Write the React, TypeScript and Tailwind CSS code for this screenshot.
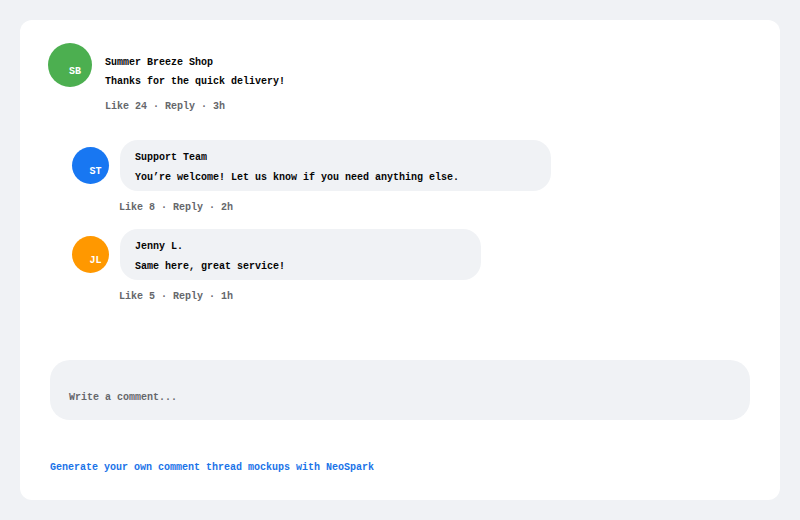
import React from 'react'

interface Reply {
  id: number;
  initials: string;
  name: string;
  text: string;
  likes: number;
  time: string;
  color: string;
  width: string;
  gap: string;
}

const replies: Reply[] = [
  {
    id: 1,
    initials: 'ST',
    name: 'Support Team',
    text: 'You’re welcome! Let us know if you need anything else.',
    likes: 8,
    time: '2h',
    color: 'bg-[#1877f2]',
    width: 'w-[431px]',
    gap: 'mt-[25px]',
  },
  {
    id: 2,
    initials: 'JL',
    name: 'Jenny L.',
    text: 'Same here, great service!',
    likes: 5,
    time: '1h',
    color: 'bg-[#ff9800]',
    width: 'w-[361px]',
    gap: 'mt-[13px]',
  },
]

// Like · Reply · time line under each comment
const MetaLine = ({ likes, time }: { likes: number; time: string }) => (
  <div className="leading-4 text-[10px] text-[#65676b] whitespace-pre">
    {`Like ${likes} · Reply · ${time}`}
  </div>
)

const Avatar = ({ initials, color, size }: { initials: string; color: string; size: string }) => (
  <div
    className={`${size} ${color} shrink-0 rounded-full flex items-center justify-center pl-[10px] pt-[13px] text-white text-[10px] leading-none`}
  >
    {initials}
  </div>
)

export default function App() {
  return (
    <div className="min-h-[520px] bg-[#f0f2f5] p-5 font-['Liberation_Mono',monospace] font-bold">
      <div className="h-[480px] bg-white rounded-xl px-[30px] pt-[23px]">
        {/* top-level comment */}
        <div className="flex items-start">
          <Avatar initials="SB" color="bg-[#4caf50]" size="w-[44px] h-[44px] -ml-[2px]" />
          <div className="ml-[13px] pt-[12px]">
            <div className="leading-4 text-[10px] text-[#050505]">Summer Breeze Shop</div>
            <div className="mt-[3px] leading-4 text-[10px] text-[#050505]">Thanks for the quick delivery!</div>
            <div className="mt-[9px]">
              <MetaLine likes={24} time="3h" />
            </div>
          </div>
        </div>

        {/* replies */}
        <div className="ml-[22px]">
          {replies.map((r) => (
            <div key={r.id} className={r.gap}>
              <div className="flex items-center gap-[11px]">
                <Avatar initials={r.initials} color={r.color} size="w-[37px] h-[37px]" />
                <div className={`${r.width} h-[51px] bg-[#f0f2f5] rounded-[18px] px-[15px] pt-[10px]`}>
                  <div className="leading-4 text-[10px] text-[#050505]">{r.name}</div>
                  <div className="mt-[4px] leading-4 text-[10px] text-[#050505]">{r.text}</div>
                </div>
              </div>
              <div className="mt-[9px] pl-[47px]">
                <MetaLine likes={r.likes} time={r.time} />
              </div>
            </div>
          ))}
        </div>

        {/* comment box */}
        <div className="mt-[55px] h-[60px] bg-[#f0f2f5] rounded-[20px] pl-[19px] pt-[30px]">
          <div className="leading-4 text-[10px] text-[#65676b]">Write a comment...</div>
        </div>

        <div className="mt-[40px] leading-4 text-[10px] text-[#1a73e8]">
          Generate your own comment thread mockups with NeoSpark
        </div>
      </div>
    </div>
  )
}
